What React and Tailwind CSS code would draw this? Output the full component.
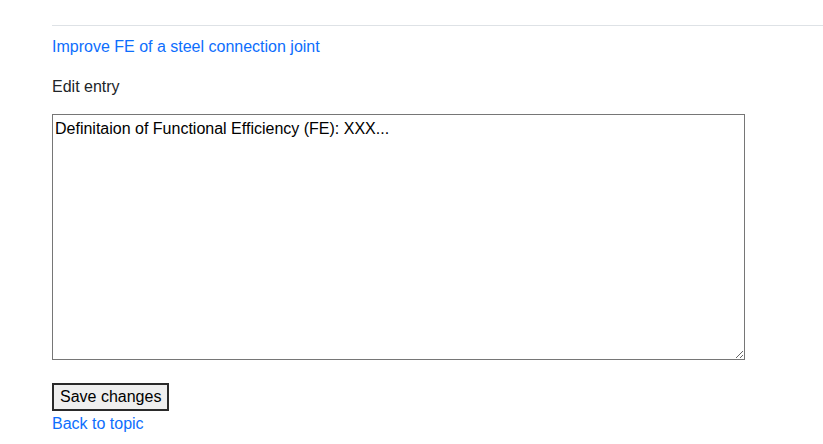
import React, { useState } from 'react';

const EditEntry = () => {
  const [content, setContent] = useState('Definitaion of Functional Efficiency (FE): XXX...');

  return (
    <div className="bg-white pl-[52px] text-[16px] leading-6 text-[#212529]" style={{ fontFamily: '"Liberation Sans", Arial, sans-serif' }}>
      <hr className="mt-[25px] border-0 border-t border-[#dee2e6]" />

      {/* Topic link */}
      <a href="#" className="mt-[9px] block w-fit text-[#0d6efd]">
        Improve FE of a steel connection joint
      </a>

      <p className="mt-[16px]">Edit entry</p>

      <form onSubmit={(e) => e.preventDefault()}>
        <textarea
          value={content}
          onChange={(e) => setContent(e.target.value)}
          className="mt-[15px] block h-[246px] w-[693px] border border-[#767676] px-[2px] py-[3px] text-[16px] leading-[22px] text-black outline-none"
        />

        <button
          type="submit"
          className="mt-[23px] block h-[28px] border-2 border-[#2a2a2a] bg-[#efefef] px-[6px] text-[16px] leading-5 text-black"
        >
          Save changes
        </button>
      </form>

      <a href="#" className="mt-[1px] block w-fit text-[#0d6efd]">
        Back to topic
      </a>
    </div>
  );
};

export default function App() {
  return <EditEntry />;
}
